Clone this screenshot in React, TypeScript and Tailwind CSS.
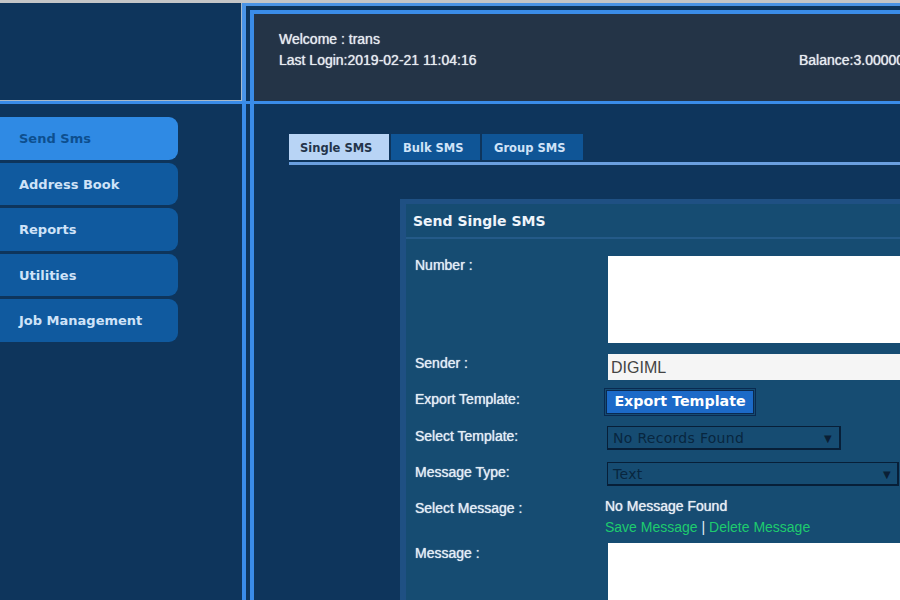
export default function App() {
  const nav = ["Send Sms", "Address Book", "Reports", "Utilities", "Job Management"];
  const verdana = "font-['DejaVu_Sans',sans-serif] font-bold";
  const label = "w-[193px] shrink-0 text-[14px] leading-[18px] text-[#e3edf6] [text-shadow:0_0_1px_#e3edf6]";
  const select = "-ml-[1px] h-[24px] border-[2px] border-[#071f38] border-l-[1px] border-t-[1px] pl-[5px] pt-[1px] flex items-center justify-between text-[14px] tracking-[0.3px] text-[#08263f] font-['DejaVu_Sans',sans-serif]";
  return (
    <div className="w-[900px] h-[600px] overflow-hidden bg-[#0e355c] flex flex-col font-['Liberation_Sans',sans-serif]">
      <div className="h-[3px] shrink-0 bg-[#c4c6c8]" />
      <div className="flex h-[98px] shrink-0">
        <div className="w-[242px] shrink-0 border-r border-b border-[#a9b9c9]" />
        <div className="flex-1 border-l-[4px] border-t-[3px] border-[#4a94e6] pl-[4px] pt-[4px]">
          <div className="h-full border-l-[4px] border-t-[4px] border-[#3a8ce8] bg-[#243447] pl-[25px] pt-[15px] text-[14px] leading-[21px] text-[#e6ebf0] [text-shadow:0_0_1px_#e6ebf0]">
            <div>Welcome : trans</div>
            <div className="flex w-[700px]">
              <span className="w-[520px] shrink-0">Last Login:2019-02-21 11:04:16</span>
              <span className="whitespace-nowrap">Balance:3.00000</span>
            </div>
          </div>
        </div>
      </div>
      <div className="h-[3px] shrink-0 bg-[#3a8ce8]" />
      <div className="flex flex-1 min-h-0">
        <div className="w-[242px] shrink-0 pt-[13px]">
          {nav.map((n, i) => (
            <div
              key={n}
              className={`w-[178px] h-[42.5px] mb-[3px] rounded-r-[9px] pl-[19px] pt-[1px] flex items-center text-[13px] ${verdana} ${i === 0 ? "bg-[#2f8ae4] text-[#0d4f8f]" : "bg-[#105a9f] text-[#cfe3f8]"}`}
            >
              {n}
            </div>
          ))}
        </div>
        <div className="flex-1 min-w-0 border-l-[4px] border-[#3a8ce8] pl-[4px]">
          <div className="h-full border-l-[4px] border-[#3a8ce8] pl-[35px] pt-[30px]">
            <div className={`flex gap-[2px] h-[26px] text-[11.5px] ${verdana}`}>
              <div className="w-[100px] pt-[4px] pl-[11px] flex items-center bg-[#b8d4f5] text-[#24344a]">Single SMS</div>
              <div className="w-[89px] pt-[4px] pl-[12px] flex items-center bg-[#0f5596] text-[#cfe3f8]">Bulk SMS</div>
              <div className="w-[101px] pt-[4px] pl-[12px] flex items-center bg-[#0f5596] text-[#cfe3f8]">Group SMS</div>
            </div>
            <div className="h-[3px] mt-[2px] bg-[#6a9fdf]" />
            <div className="ml-[111px] mt-[34px] w-[600px] border-l-[6px] border-t-[5px] border-[#1f5083] bg-[#164c72] h-[420px]">
              <div className={`h-[33px] pl-[7px] pt-[2px] flex items-center text-[14px] text-[#eef4fa] ${verdana}`}>Send Single SMS</div>
              <div className="h-[2px] bg-[#245a88]" />
              <div className="pl-[9px] pt-[17px]">
                <div className="flex h-[87px]">
                  <div className={label}>Number :</div>
                  <div className="w-[400px] h-[87px] bg-white" />
                </div>
                <div className="flex h-[26px] mt-[11px] items-center">
                  <div className={`${label} pb-[8px] h-[26px]`}>Sender :</div>
                  <div className="w-[400px] h-[26px] bg-[#f5f5f5] pl-[3px] text-[16px] leading-[28px] text-[#444]">DIGIML</div>
                </div>
                <div className="flex h-[28px] mt-[8px] items-center">
                  <div className={`${label} pb-[6px] h-[28px] pt-[2px]`}>Export Template:</div>
                  <button className={`-ml-[4px] w-[152px] h-[28px] bg-[#1c6ac8] bg-clip-padding border-[3px] border-double border-[#0a2a50] text-[14.25px] text-white ${verdana}`}>Export Template</button>
                </div>
                <div className="flex h-[24px] mt-[10px] items-center">
                  <div className={`${label} pb-[4px] h-[24px] pt-[1px]`}>Select Template:</div>
                  <div className={`${select} w-[234px] pr-[7px]`}>
                    <span>No Records Found</span>
                    <span className="text-[10px] text-[#0a1f35]">▼</span>
                  </div>
                </div>
                <div className="flex h-[24px] mt-[12px] items-center">
                  <div className={`${label} pb-[4px] h-[24px] pt-[1px]`}>Message Type:</div>
                  <div className={`${select} w-[292px] pr-[6px]`}>
                    <span>Text</span>
                    <span className="text-[10px] text-[#0a1f35]">▼</span>
                  </div>
                </div>
                <div className="flex h-[46px] mt-[11px]">
                  <div className={`${label} pt-[2px]`}>Select Message :</div>
                  <div className="-ml-[3px] -mt-[1px] text-[14px] leading-[21px]">
                    <div className="text-[#e6edf4] [text-shadow:0_0_1px_#e6edf4]">No Message Found</div>
                    <div className="text-[#e6edf4]">
                      <span className="text-[#1ecb6e]">Save Message</span> | <span className="text-[#1ecb6e]">Delete Message</span>
                    </div>
                  </div>
                </div>
                <div className="flex">
                  <div className={`${label} pt-[1px]`}>Message :</div>
                  <div className="w-[400px] h-[120px] bg-white" />
                </div>
              </div>
            </div>
          </div>
        </div>
      </div>
    </div>
  );
}
